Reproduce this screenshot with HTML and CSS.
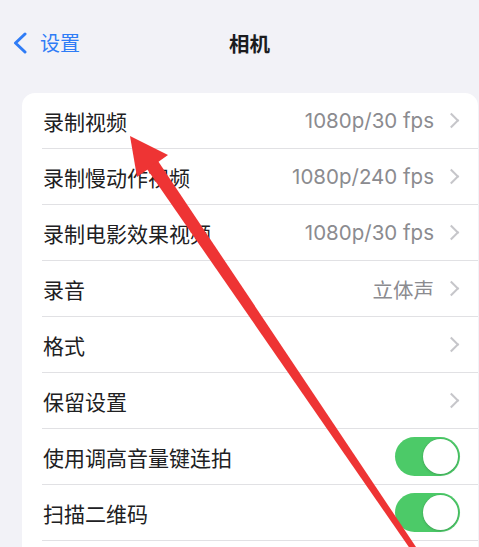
FILE: index.html
```html
<!DOCTYPE html>
<html lang="zh-CN">
<head>
<meta charset="utf-8">
<title>相机</title>
<link rel="stylesheet" href="styles.css">
</head>
<body>
<div class="page">
  <header class="nav">
    <div class="back">
      <svg class="back-icon" width="16" height="22" viewBox="0 0 16 22"><path d="M13 2 L3.5 11 L13 20" fill="none" stroke="#2f7cf6" stroke-width="3" stroke-linecap="round" stroke-linejoin="round"/></svg>
      <span class="back-text">设置</span>
    </div>
    <div class="title">相机</div>
  </header>

  <section class="card">
    <div class="row"><span class="label">录制视频</span><span class="value">1080p/30 fps</span><span class="chev"></span></div>
    <div class="row"><span class="label">录制慢动作视频</span><span class="value">1080p/240 fps</span><span class="chev"></span></div>
    <div class="row"><span class="label">录制电影效果视频</span><span class="value">1080p/30 fps</span><span class="chev"></span></div>
    <div class="row"><span class="label">录音</span><span class="value">立体声</span><span class="chev"></span></div>
    <div class="row"><span class="label">格式</span><span class="value"></span><span class="chev"></span></div>
    <div class="row"><span class="label">保留设置</span><span class="value"></span><span class="chev"></span></div>
    <div class="row"><span class="label">使用调高音量键连拍</span><span class="toggle"><span class="knob"></span></span></div>
    <div class="row"><span class="label">扫描二维码</span><span class="toggle"><span class="knob"></span></span></div>
    <div class="row"></div>
  </section>

  <svg class="arrow" width="479" height="547" viewBox="0 0 479 547">
    <polygon points="130,136 168,155 137,177" fill="#ee3434"/>
    <polygon points="158,161 147,169 413,553 418,550" fill="#ee3434"/>
  </svg>
</div>
</body>
</html>
```

FILE: styles.css
```css
html, body {
  margin: 0;
  padding: 0;
}
body {
  background: #f2f2f7;
  font-family: "Inter", "Noto Sans CJK SC", "Noto Sans", sans-serif;
  color: #1d1d1f;
  width: 479px;
  height: 547px;
  overflow: hidden;
}
.page {
  position: relative;
  width: 479px;
  height: 547px;
  overflow: hidden;
}
.nav {
  height: 86px;
  display: flex;
  align-items: center;
  padding-left: 12px;
}
.back {
  display: flex;
  align-items: center;
  gap: 12px;
  width: 217px;
  color: #2f7cf6;
}
.back-icon {
  display: block;
}
.back-text {
  font-family: "Noto Sans CJK SC", sans-serif;
  font-size: 20px;
  line-height: 24px;
}
.title {
  font-family: "Noto Sans CJK SC", sans-serif;
  font-weight: 700;
  font-size: 20.5px;
  line-height: 24px;
  color: #1c1c1e;
}
.card {
  margin: 7px 1px 0 22px;
  background: #ffffff;
  border-radius: 13px;
  padding-left: 20px;
  height: 480px;
}
.row {
  height: 55px;
  border-bottom: 1px solid #e1e1e4;
  display: flex;
  align-items: center;
  padding-right: 18px;
}
.label {
  font-family: "Noto Sans CJK SC", sans-serif;
  font-size: 21px;
  color: #202022;
  flex: 1;
  padding-left: 1px;
}
.value {
  font-size: 20.5px;
  color: #8b8b8f;
  margin-right: 12px;
}
.chev {
  width: 9px;
  height: 9px;
  border-top: 2px solid #c6c6ca;
  border-right: 2px solid #c6c6ca;
  transform: rotate(45deg);
  margin-right: 3px;
}
.toggle {
  width: 65px;
  height: 39px;
  border-radius: 20px;
  background: #4cca68;
  position: relative;
}
.knob {
  position: absolute;
  right: 2px;
  top: 2px;
  width: 35px;
  height: 35px;
  border-radius: 50%;
  background: #fff;
  box-shadow: 0 0 0 0.5px rgba(0,0,0,0.08), 0 1px 3px rgba(0,0,0,0.15);
}
.arrow {
  position: absolute;
  left: 0;
  top: 0;
  pointer-events: none;
}
```
